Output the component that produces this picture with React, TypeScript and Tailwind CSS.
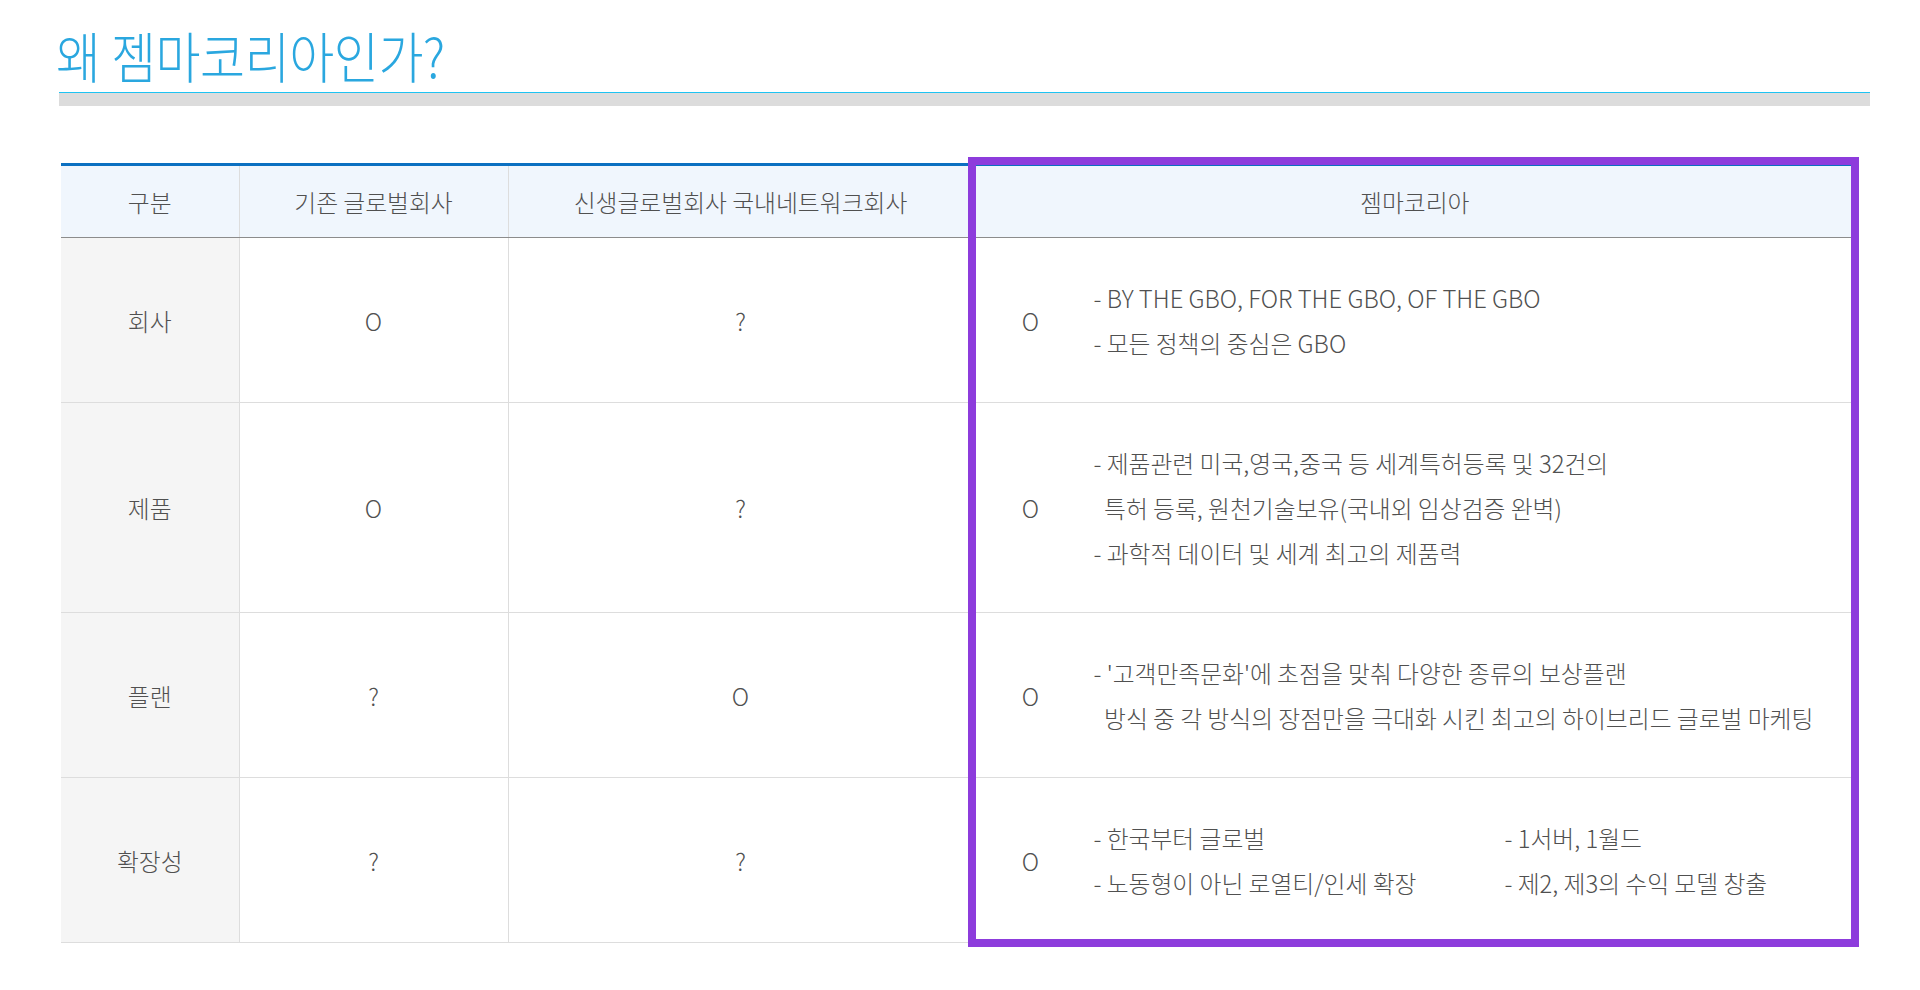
import React from "react";

const font = { fontFamily: '"Noto Sans CJK KR", "Noto Sans", sans-serif' };

type Row = {
  label: string;
  legacy: string;
  network: string;
  lines?: string[];
  split?: [string, string][];
};

const rows: Row[] = [
  {
    label: "회사",
    legacy: "O",
    network: "?",
    lines: ["- BY THE GBO, FOR THE GBO, OF THE GBO", "- 모든 정책의 중심은 GBO"],
  },
  {
    label: "제품",
    legacy: "O",
    network: "?",
    lines: [
      "- 제품관련 미국,영국,중국 등 세계특허등록 및 32건의",
      "\u00a0\u00a0특허 등록, 원천기술보유(국내외 임상검증 완벽)",
      "- 과학적 데이터 및 세계 최고의 제품력",
    ],
  },
  {
    label: "플랜",
    legacy: "?",
    network: "O",
    lines: [
      "- '고객만족문화'에 초점을 맞춰 다양한 종류의 보상플랜",
      "\u00a0\u00a0방식 중 각 방식의 장점만을 극대화 시킨 최고의 하이브리드 글로벌 마케팅",
    ],
  },
  {
    label: "확장성",
    legacy: "?",
    network: "?",
    split: [
      ["- 한국부터 글로벌", "- 1서버, 1월드"],
      ["- 노동형이 아닌 로열티/인세 확장", "- 제2, 제3의 수익 모델 창출"],
    ],
  },
];

function GemmaCell({ row }: { row: Row }) {
  return (
    <div className="flex items-center">
      <div className="w-[114px] text-center">O</div>
      <div className="ml-[6px]">
        {row.lines &&
          row.lines.map((l, i) => (
            <div key={i} className="whitespace-pre">
              {l}
            </div>
          ))}
        {row.split &&
          row.split.map(([a, b], i) => (
            <div key={i} className="flex">
              <div className="w-[411px]">{a}</div>
              <div>{b}</div>
            </div>
          ))}
      </div>
    </div>
  );
}

export default function App() {
  return (
    <div className="min-h-[990px] bg-white text-[#505050]" style={font}>
      <div className="pl-[59px] pt-[20px] w-[1870px]">
        <h1 className="ml-[-3px] h-[72px] text-[49px] leading-[72px] text-[#2aa7df] tracking-[-0.5px] font-light origin-bottom scale-y-[1.12] translate-y-[3px]">
          왜 젬마코리아인가?
        </h1>
        <div className="h-px bg-[#1ec3f2]" />
        <div className="h-[13px] bg-[#dcdcdc]" />

        <div className="relative ml-[2px] mt-[57px] w-[1795px]">
          <table className="w-full table-fixed border-collapse text-[23.8px] font-light leading-[45px]">
            <colgroup>
              <col className="w-[178px]" />
              <col className="w-[269px]" />
              <col className="w-[465px]" />
              <col />
            </colgroup>
            <thead>
              <tr className="border-t-[3px] border-[#0b70c1] bg-[#f0f6fd]">
                <th className="h-[73px] border-b border-[#8c8c8c] font-light">구분</th>
                <th className="border-b border-l border-b-[#8c8c8c] border-l-[#dddddd] font-light">기존 글로벌회사</th>
                <th className="border-b border-l border-b-[#8c8c8c] border-l-[#dddddd] font-light">신생글로벌회사 국내네트워크회사</th>
                <th className="border-b border-l border-b-[#8c8c8c] border-l-[#dddddd] font-light">젬마코리아</th>
              </tr>
            </thead>
            <tbody>
              {rows.map((row) => (
                <tr key={row.label} className="border-b border-[#dddddd]">
                  <td className="bg-[#f5f5f5] py-[37px] text-center">{row.label}</td>
                  <td className="border-l border-[#dddddd] text-center">{row.legacy}</td>
                  <td className="border-l border-[#dddddd] text-center">{row.network}</td>
                  <td className="border-l border-[#dddddd] py-[37px]">
                    <GemmaCell row={row} />
                  </td>
                </tr>
              ))}
            </tbody>
          </table>
          <div className="pointer-events-none absolute left-[907px] top-[-6px] h-[790px] w-[891px] border-[8px] border-[#8d3cdc]" />
        </div>
      </div>
    </div>
  );
}
